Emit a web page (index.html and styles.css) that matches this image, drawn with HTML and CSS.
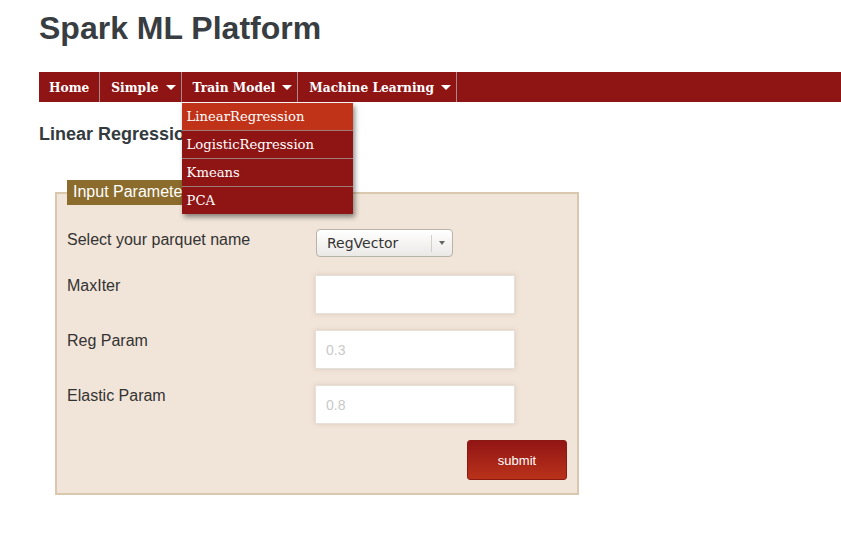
FILE: index.html
```html
<!DOCTYPE html>
<html>
<head>
<meta charset="utf-8">
<link rel="stylesheet" href="styles.css">
</head>
<body>
<h1 class="title">Spark ML Platform</h1>
<nav class="nav">
  <ul class="menu">
    <li class="item"><span class="link">Home</span></li>
    <li class="item"><span class="link has-caret">Simple <span class="caret"></span></span></li>
    <li class="item open"><span class="link has-caret">Train Model <span class="caret"></span></span>
      <ul class="dropdown">
        <li class="dd active">LinearRegression</li>
        <li class="dd">LogisticRegression</li>
        <li class="dd">Kmeans</li>
        <li class="dd">PCA</li>
      </ul>
    </li>
    <li class="item"><span class="link has-caret">Machine Learning <span class="caret"></span></span></li>
  </ul>
</nav>
<h2 class="heading">Linear Regression</h2>
<fieldset class="box">
  <legend class="legend">Input Parameters</legend>
  <div class="row first">
    <label class="label">Select your parquet name</label>
    <div class="select"><span class="sel-text">RegVector</span><span class="sel-arrow"><span class="tri"></span></span></div>
  </div>
  <div class="row">
    <label class="label">MaxIter</label>
    <input class="input" type="text">
  </div>
  <div class="row">
    <label class="label">Reg Param</label>
    <input class="input" type="text" placeholder="0.3">
  </div>
  <div class="row">
    <label class="label">Elastic Param</label>
    <input class="input" type="text" placeholder="0.8">
  </div>
  <div class="actions">
    <button class="submit" type="button">submit</button>
  </div>
</fieldset>
</body>
</html>
```
FILE: styles.css
```css
html, body { margin: 0; padding: 0; background: #fff; }
body { padding: 0 0 0 39px; font-family: "Liberation Sans", Arial, sans-serif; color: #333; }
.title {
  margin: 0;
  padding-top: 10px;
  font-size: 32px;
  line-height: 37px;
  font-weight: bold;
  color: #383d41;
  height: 62px;
}
.nav { background: #8f1515; height: 30px; }
.menu { list-style: none; margin: 0; padding: 0; display: flex; height: 30px; }
.item { position: relative; border-right: 1px solid #a88a8a; height: 30px; }
.link {
  display: flex; align-items: center; gap: 7px;
  height: 30px; padding: 1px 10px 0; box-sizing: border-box;
  font-family: "DejaVu Serif", serif; font-weight: bold; font-size: 12.2px;
  color: #fff;
}
.link.has-caret { padding: 1px 5px 0 11px; }
.caret { width: 0; height: 0; border-left: 5px solid transparent; border-right: 5px solid transparent; border-top: 5px solid #fff; }
.dropdown {
  position: absolute; left: 0; top: 31px;
  list-style: none; margin: 0; padding: 0;
  width: 171px; background: #8f1515;
  box-shadow: 2px 3px 5px rgba(0,0,0,0.45);
  z-index: 10;
}
.dd {
  height: 27px; line-height: 27px; padding-left: 5px;
  font-family: "DejaVu Serif", serif; font-size: 13.2px; color: #fff;
  border-bottom: 1px solid #a07b7b;
}
.dd:last-child { border-bottom: none; }
.dd.active { background: #c03318; }
.heading {
  margin: 22px 0 0; font-size: 18px; line-height: 21px; font-weight: bold; color: #333a3e;
}
.box {
  margin: 35px 0 0 16px; width: 524px; box-sizing: border-box;
  height: 315px;
  background: #f1e4d8; border: 2px solid #d9c8ad;
  padding: 24px 10px 0 10px;
  position: relative;
}
.legend {
  background: #8b6c2d; color: #fff; font-size: 16px;
  padding: 2px 6px 3px; line-height: 20px;
  margin-left: 0;
}
.row { display: flex; align-items: flex-start; height: 55px; }
.row.first { height: 46px; }
.label { width: 249px; font-size: 16px; color: #333; padding-top: 2px; }
.select {
  margin-top: 0;
  width: 137px; height: 28px; box-sizing: border-box;
  border: 1px solid #b7b2aa; border-radius: 4px;
  background: linear-gradient(#fff, #ebe9e6);
  display: flex; align-items: center;
  font-family: "DejaVu Sans", sans-serif; font-size: 14px; color: #333;
}
.sel-text { flex: 1; padding-left: 10px; }
.sel-arrow { width: 20px; height: 17px; border-left: 1px solid #d3d0cc; display: flex; align-items: center; justify-content: center; }
.tri { width: 0; height: 0; border-left: 3px solid transparent; border-right: 3px solid transparent; border-top: 4px solid #666; }
.input {
  width: 200px; height: 39px; box-sizing: border-box; margin: 0 0 0 -1px;
  border: 1px solid #e6e0da; background: #fff;
  box-shadow: 0 0 4px rgba(160,120,90,0.25);
  padding: 0 10px; font-size: 14px; font-family: "Liberation Sans", Arial, sans-serif;
  outline: none;
}
.input::placeholder { color: #c9c9c9; }
.actions { display: flex; justify-content: flex-end; padding: 0; }
.submit {
  width: 100px; height: 40px;
  background: linear-gradient(#921515, #b9321a);
  border: 1px solid #8a1a12; border-radius: 3px;
  color: #fff; font-size: 13px; font-family: "Liberation Sans", Arial, sans-serif;
}
```
